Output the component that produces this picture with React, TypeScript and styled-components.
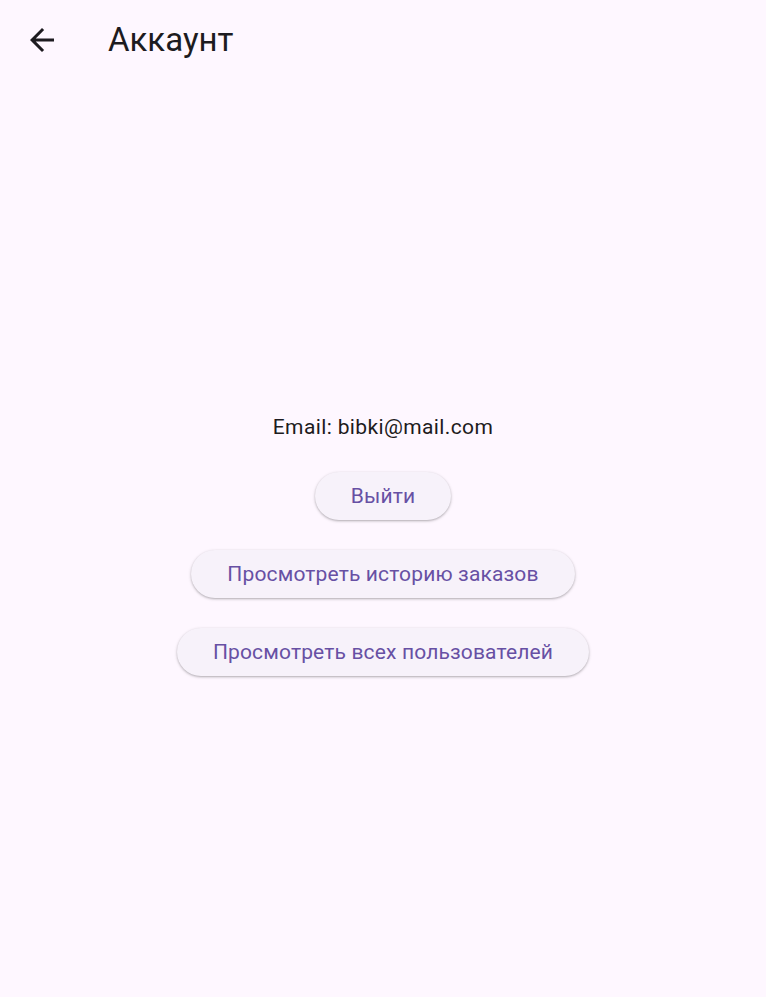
import React from "react";
import styled, { createGlobalStyle } from "styled-components";

const GlobalStyle = createGlobalStyle`
  html, body {
    margin: 0;
    padding: 0;
    background: #fef7ff;
  }
  body {
    font-family: Roboto, "Noto Sans", "Liberation Sans", sans-serif;
    color: #1d1b20;
  }
  * { box-sizing: border-box; }
`;

const Page = styled.div`
  min-height: 100vh;
  display: flex;
  flex-direction: column;
  background: #fef7ff;
`;

const AppBar = styled.header`
  height: 80px;
  display: flex;
  align-items: center;
  flex-shrink: 0;
`;

const Leading = styled.div`
  width: 84px;
  height: 80px;
  display: flex;
  align-items: center;
  justify-content: center;
`;

const IconButton = styled.button`
  width: 60px;
  height: 60px;
  border: none;
  background: transparent;
  border-radius: 50%;
  display: flex;
  align-items: center;
  justify-content: center;
  padding: 0;
  cursor: pointer;
  color: #1d1b20;
`;

const Title = styled.h1`
  margin: 0 0 0 24px;
  font-size: 33px;
  font-weight: 400;
  line-height: 42px;
  color: #1d1b20;
  letter-spacing: 0;
`;

const Body = styled.main`
  flex: 1;
  display: flex;
  flex-direction: column;
  align-items: center;
  justify-content: center;
  padding-top: 10px;
  gap: 30px;
`;

const Email = styled.p`
  margin: 0;
  font-size: 21px;
  line-height: 30px;
  letter-spacing: 0.375px;
  color: #1d1b20;
`;

const PillButton = styled.button`
  height: 48px;
  padding: 0 36px;
  border: none;
  border-radius: 24px;
  background: #f7f2fa;
  color: #6750a4;
  font-family: Roboto, "Noto Sans", "Liberation Sans", sans-serif;
  font-size: 21px;
  font-weight: 400;
  letter-spacing: 0.15px;
  box-shadow: 0 1px 2px rgba(0, 0, 0, 0.22), 0 1px 3px 1px rgba(0, 0, 0, 0.08);
  cursor: pointer;
`;

const BackIcon = () => (
  <svg width="36" height="36" viewBox="0 0 24 24" fill="currentColor">
    <path d="M20 11H7.83l5.59-5.59L12 4l-8 8 8 8 1.41-1.41L7.83 13H20v-2z" />
  </svg>
);

export default function App() {
  return (
    <>
      <GlobalStyle />
      <Page>
        <AppBar>
          <Leading>
            <IconButton aria-label="Назад">
              <BackIcon />
            </IconButton>
          </Leading>
          <Title>Аккаунт</Title>
        </AppBar>
        <Body>
          <Email>Email: bibki@mail.com</Email>
          <PillButton>Выйти</PillButton>
          <PillButton>Просмотреть историю заказов</PillButton>
          <PillButton>Просмотреть всех пользователей</PillButton>
        </Body>
      </Page>
    </>
  );
}
